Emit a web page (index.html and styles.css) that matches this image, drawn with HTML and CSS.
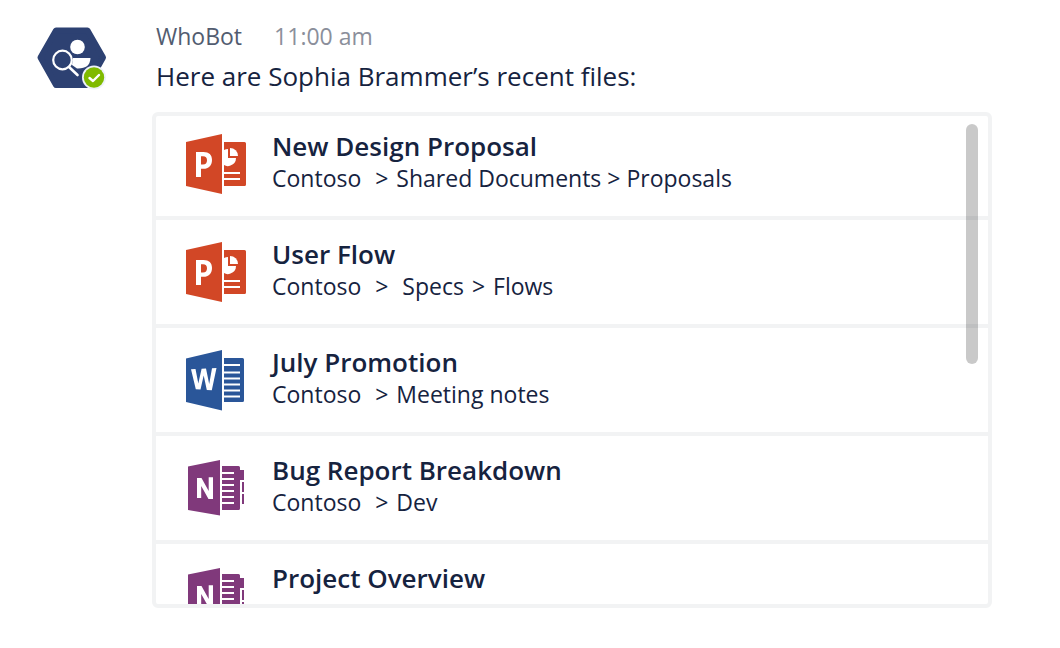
FILE: index.html
```html
<!DOCTYPE html>
<html lang="en">
<head>
<meta charset="utf-8">
<meta name="viewport" content="width=device-width, initial-scale=1">
<title>WhoBot</title>
<link rel="stylesheet" href="styles.css">
</head>
<body>
<svg class="defs" aria-hidden="true">
  <symbol id="powerpoint" viewBox="0 0 64 64">
    <path fill="#d24726" d="M2 10 38 2V62L2 54Z"/>
    <path fill="#d24726" d="M40 10H60.500Q62 10 62 11.500V52.500Q62 54 60.500 54H40V48H56V46H40V42H56V40H40V33Q43 35 46.500 33.500Q52 31.500 52 26H44V17Q42 17 40 18Z"/>
    <path fill="#fff" d="M46 16A8 8 0 0 1 54 24H46Z"/>
    <path fill="#fff" fill-rule="evenodd" d="M12 20H19.500C25 20 28 22.800 28 28C28 33.500 24.500 36.800 19.500 36.800H17V45H12ZM17 24.300V32.600H19C21.700 32.600 23 31 23 28.300C23 25.700 21.700 24.300 19 24.300Z"/>
  </symbol>
  <symbol id="word" viewBox="0 0 64 64">
    <path fill="#2a5699" d="M2 10.500 38 2V62.500L2 54Z"/>
    <path fill="#2a5699" d="M40 10H58.500Q60 10 60 11.500V52.500Q60 54 58.500 54H40V49.500H56V47.500H40V43.500H56V41.500H40V37.500H56V35.500H40V31.500H56V29.500H40V25.500H56V23.500H40V18H56V16H40Z"/>
    <path fill="#fff" d="M7 21.200 11.500 21 14.300 35.500 17.600 20.700 22 20.500 25.200 36 28 20.200 32.500 20 27.800 42.300 22.800 42 19.700 27.500 16.500 41.600 11.800 41.300Z"/>
  </symbol>
  <symbol id="onenote" viewBox="0 0 64 64">
    <path fill="#80397b" d="M4 10.500 36 4V59.500L4 54Z"/>
    <path fill="#80397b" d="M38 10H54.500Q56 10 56 11.500V14H60V24H56V52.500Q56 54 54.500 54H38V48H50V46H38V42H50V40H38V36H50V34H38V30H50V28H38V24H50V22H38V18H50V16H38Z"/>
    <path fill="#80397b" d="M58 26H60V36H58ZM58 38H60V48H58Z"/>
    <path fill="#fff" d="M13 22H17.500L24.700 35V21.300H29V43H24.500L17.200 30V42H13Z"/>
  </symbol>
</svg>
<main class="message">
  <svg class="avatar" viewBox="0 0 72 66" role="img" aria-label="WhoBot, available">
    <path fill="#2d4172" stroke="#2d4172" stroke-width="6" stroke-linejoin="round" d="M20 5.500H51.500L67 32.500 51.500 60H20L4.500 32.500Z"/>
    <circle cx="41.500" cy="22" r="7.300" fill="#fff"/>
    <path fill="#fff" d="M37 33H54.500Q54 44 41 43.500L36 40Z"/>
    <circle cx="26.500" cy="35" r="9.300" fill="#2d4172" stroke="#fff" stroke-width="2.200"/>
    <path stroke="#fff" stroke-width="2.600" stroke-linecap="round" d="M33 42 41.500 50"/>
    <circle cx="58" cy="52.500" r="12" fill="#eef2fa"/>
    <circle cx="58" cy="52.500" r="10.200" fill="#7fba00"/>
    <path fill="none" stroke="#fff" stroke-width="2.400" stroke-linecap="round" stroke-linejoin="round" d="M53.500 53 57 56 63 50"/>
  </svg>
  <div class="body">
    <header class="meta"><span>WhoBot</span><time class="time" datetime="11:00">11:00 am</time></header>
    <p class="text">Here are Sophia Brammer’s recent files:</p>
    <section class="card" aria-label="Recent files">
      <ul class="files">
        <li class="file"><svg class="icon" aria-hidden="true"><use href="#powerpoint"/></svg><div><h2 class="name">New Design Proposal</h2><p class="path">Contoso&nbsp; <span class="sep">&gt;</span> Shared Documents &gt; Proposals</p></div></li>
        <li class="file"><svg class="icon" aria-hidden="true"><use href="#powerpoint"/></svg><div><h2 class="name">User Flow</h2><p class="path">Contoso&nbsp; <span class="sep">&gt;</span>&nbsp; Specs <span class="sep">&gt;</span> Flows</p></div></li>
        <li class="file"><svg class="icon" aria-hidden="true"><use href="#word"/></svg><div><h2 class="name">July Promotion</h2><p class="path">Contoso&nbsp; <span class="sep">&gt;</span> Meeting notes</p></div></li>
        <li class="file"><svg class="icon" aria-hidden="true"><use href="#onenote"/></svg><div><h2 class="name">Bug Report Breakdown</h2><p class="path">Contoso&nbsp; <span class="sep">&gt;</span> Dev</p></div></li>
        <li class="file"><svg class="icon" aria-hidden="true"><use href="#onenote"/></svg><div><h2 class="name">Project Overview</h2></div></li>
      </ul>
      <div class="thumb"></div>
    </section>
  </div>
</main>
</body>
</html>
```
FILE: styles.css
```css
* { box-sizing: border-box; margin: 0; }
body {
  background: #fff;
  color: #16233f;
  font-family: "Segoe UI", "Open Sans", "Noto Sans", sans-serif;
}
.defs { position: absolute; width: 0; height: 0; }
.message {
  display: flex;
  align-items: flex-start;
  gap: 44px;
  height: 100vh;
  padding: 20px 68px 40px 36px;
}
.avatar { flex: none; width: 72px; height: 66px; margin-top: 5px; }
.body {
  display: flex;
  flex: 1;
  flex-direction: column;
  min-width: 0;
  height: 100%;
}
.meta {
  display: flex;
  gap: 32px;
  padding-left: 4px;
  color: #525c70;
  font-size: 23px;
  line-height: 32px;
}
.time { color: #8b8f9b; }
.text {
  margin-top: 2px;
  padding-left: 4px;
  font-size: 26px;
  line-height: 44px;
}
.card {
  position: relative;
  flex: 1;
  min-height: 0;
  margin-top: 14px;
  overflow: hidden;
  border: 4px solid #f2f3f4;
  border-radius: 6px;
}
.files { padding: 0; list-style: none; }
.file {
  display: flex;
  gap: 24px;
  min-height: 108px;
  padding: 20px 28px;
  border-bottom: 4px solid #f2f3f4;
}
.file:first-child { min-height: 104px; padding-top: 16px; }
.icon { flex: none; width: 64px; height: 64px; }
.name {
  font-size: 26px;
  font-weight: 600;
  line-height: 28px;
}
.path { font-size: 23px; line-height: 36px; }
.sep { padding: 0 2px; }
.thumb {
  position: absolute;
  top: 8px;
  right: 10px;
  width: 12px;
  height: 240px;
  border-radius: 6px;
  background: rgba(0, 0, 0, 0.21);
}
```
